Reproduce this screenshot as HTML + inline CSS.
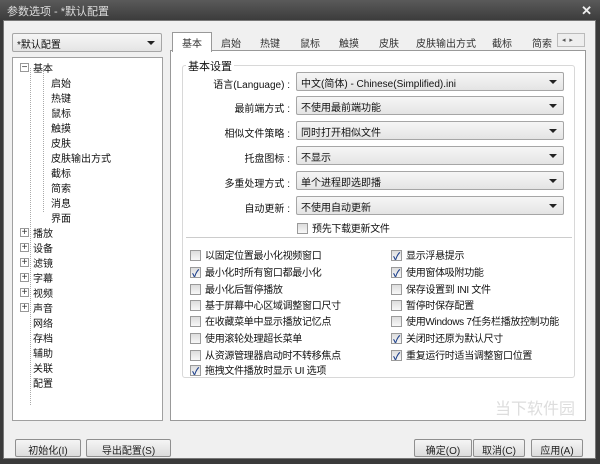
<!DOCTYPE html>
<html><head><meta charset="utf-8"><style>
*{margin:0;padding:0;box-sizing:border-box}
body{width:600px;height:464px;background:#3a3a3a;font-family:"Liberation Sans","Noto Sans CJK SC",sans-serif;font-size:10.5px;color:#111;position:relative;overflow:hidden}
.a{position:absolute}
.title{left:0;top:0;width:600px;height:20px;background:linear-gradient(#5a5a5a,#3c3c3c);color:#ddd;font-size:11px;padding:3px 0 0 7px}
.client{left:3px;top:20px;width:593px;height:439px;background:#f0f0f0;border:1px solid #777}
.box{background:#fff;border:1px solid #a0a0a0}
.dd{background:linear-gradient(#f6f6f6,#e4e4e4);border:1px solid #a6a6a6;border-radius:2px;height:19px;padding:2px 0 0 4px;white-space:nowrap;font-size:10px}
.dd:after{content:"";position:absolute;right:6px;top:7px;border:4px solid transparent;border-top:4px solid #222;border-bottom:0}
.lbl{text-align:right;width:110px;font-size:10px}
.cb{width:11px;height:11px;border:1px solid #9a9a9a;background:linear-gradient(#ddd,#f8f8f8);display:inline-block;vertical-align:-2px;margin-right:4px;position:relative}
.cb.k:after{content:"✓";position:absolute;left:1px;top:-3px;font-size:10px;color:#1d3f8a;font-weight:bold}
.row{white-space:nowrap;font-size:10px;letter-spacing:-0.3px}
.tree div{position:absolute;white-space:nowrap;font-size:10px}
.pm{width:9px;height:9px;border:1px solid #999;background:#fff;font-size:9px;line-height:7px;text-align:center;color:#333}
.tab{top:35px;height:17px;white-space:nowrap;color:#333;font-size:10px}
.btn{height:18px;border:1px solid #8f8f8f;border-radius:2px;background:linear-gradient(#f5f5f5,#dcdcdc);text-align:center;padding-top:2px;color:#222;font-size:10px}
</style></head><body>
<div class="a title">参数选项 - *默认配置</div>
<div class="a" style="right:8px;top:3px;color:#eee;font-size:13px;font-weight:bold">✕</div>
<div class="a client"></div>
<div class="a dd" style="left:12px;top:33px;width:150px;">*默认配置</div>
<div class="a box tree" style="left:12px;top:57px;width:151px;height:364px">
<div style="left:17px;top:10px;width:1px;height:337px;border-left:1px dotted #aaa"></div>
<div class="pm" style="left:7px;top:5px">−</div><div style="left:20px;top:2px">基本</div>
<div style="left:30px;top:9px;width:1px;height:145px;border-left:1px dotted #aaa"></div>
<div style="left:38px;top:17px">启始</div><div style="left:38px;top:32px">热键</div><div style="left:38px;top:47px">鼠标</div><div style="left:38px;top:62px">触摸</div><div style="left:38px;top:77px">皮肤</div><div style="left:38px;top:92px">皮肤输出方式</div><div style="left:38px;top:107px">截标</div><div style="left:38px;top:122px">简索</div><div style="left:38px;top:137px">消息</div><div style="left:38px;top:152px">界面</div>
<div class="pm" style="left:7px;top:170px">+</div><div style="left:20px;top:167px">播放</div>
<div class="pm" style="left:7px;top:185px">+</div><div style="left:20px;top:182px">设备</div>
<div class="pm" style="left:7px;top:200px">+</div><div style="left:20px;top:197px">滤镜</div>
<div class="pm" style="left:7px;top:215px">+</div><div style="left:20px;top:212px">字幕</div>
<div class="pm" style="left:7px;top:230px">+</div><div style="left:20px;top:227px">视频</div>
<div class="pm" style="left:7px;top:245px">+</div><div style="left:20px;top:242px">声音</div>
<div style="left:20px;top:257px">网络</div><div style="left:20px;top:272px">存档</div><div style="left:20px;top:287px">辅助</div><div style="left:20px;top:302px">关联</div><div style="left:20px;top:317px">配置</div>
</div>
<div class="a box" style="left:170px;top:50px;width:416px;height:371px;border-color:#999"></div>
<div class="a" style="left:172px;top:32px;width:40px;height:20px;background:#fff;border:1px solid #999;border-bottom:none"></div>
<div class="a tab" style="left:182px">基本</div><div class="a tab" style="left:221px">启始</div><div class="a tab" style="left:260px">热键</div><div class="a tab" style="left:300px">鼠标</div><div class="a tab" style="left:339px">触摸</div><div class="a tab" style="left:379px">皮肤</div><div class="a tab" style="left:416px">皮肤输出方式</div><div class="a tab" style="left:492px">截标</div><div class="a tab" style="left:532px">简索</div>
<div class="a" style="left:557px;top:33px;width:28px;height:14px;background:#eee;border:1px solid #bbb;font-size:7px;color:#555;padding:2px 0 0 4px">◂ &nbsp;▸</div>
<div class="a" style="left:182px;top:65px;width:393px;height:313px;border:1px solid #d8d8d8;border-radius:3px"></div>
<div class="a" style="left:186px;top:58px;background:#fff;padding:0 2px;font-size:11px">基本设置</div>
<div class="a lbl" style="left:180px;top:76px">语言(Language) :</div><div class="a dd" style="left:296px;top:72px;width:268px">中文(简体) - Chinese(Simplified).ini</div>
<div class="a lbl" style="left:180px;top:100px">最前端方式 :</div><div class="a dd" style="left:296px;top:96px;width:268px">不使用最前端功能</div>
<div class="a lbl" style="left:180px;top:125px">相似文件策略 :</div><div class="a dd" style="left:296px;top:121px;width:268px">同时打开相似文件</div>
<div class="a lbl" style="left:180px;top:150px">托盘图标 :</div><div class="a dd" style="left:296px;top:146px;width:268px">不显示</div>
<div class="a lbl" style="left:180px;top:175px">多重处理方式 :</div><div class="a dd" style="left:296px;top:171px;width:268px">单个进程即选即播</div>
<div class="a lbl" style="left:180px;top:200px">自动更新 :</div><div class="a dd" style="left:296px;top:196px;width:268px">不使用自动更新</div>
<div class="a row" style="left:297px;top:220px"><span class="cb"></span>预先下载更新文件</div>
<div class="a" style="left:186px;top:237px;width:386px;border-top:1px solid #ccc"></div>
<div class="a row" style="left:190px;top:247px"><span class="cb"></span>以固定位置最小化视频窗口</div>
<div class="a row" style="left:190px;top:264px"><span class="cb k"></span>最小化时所有窗口都最小化</div>
<div class="a row" style="left:190px;top:281px"><span class="cb"></span>最小化后暂停播放</div>
<div class="a row" style="left:190px;top:297px"><span class="cb"></span>基于屏幕中心区域调整窗口尺寸</div>
<div class="a row" style="left:190px;top:313px"><span class="cb"></span>在收藏菜单中显示播放记忆点</div>
<div class="a row" style="left:190px;top:330px"><span class="cb"></span>使用滚轮处理超长菜单</div>
<div class="a row" style="left:190px;top:347px"><span class="cb"></span>从资源管理器启动时不转移焦点</div>
<div class="a row" style="left:190px;top:362px"><span class="cb k"></span>拖拽文件播放时显示 UI 选项</div>
<div class="a row" style="left:391px;top:247px"><span class="cb k"></span>显示浮悬提示</div>
<div class="a row" style="left:391px;top:264px"><span class="cb k"></span>使用窗体吸附功能</div>
<div class="a row" style="left:391px;top:281px"><span class="cb"></span>保存设置到 INI 文件</div>
<div class="a row" style="left:391px;top:297px"><span class="cb"></span>暂停时保存配置</div>
<div class="a row" style="left:391px;top:313px"><span class="cb"></span>使用Windows 7任务栏播放控制功能</div>
<div class="a row" style="left:391px;top:330px"><span class="cb k"></span>关闭时还原为默认尺寸</div>
<div class="a row" style="left:391px;top:347px"><span class="cb k"></span>重复运行时适当调整窗口位置</div>
<div class="a" style="left:495px;top:395px;color:#ddd;font-size:16px">当下软件园</div>
<div class="a btn" style="left:15px;top:439px;width:66px">初始化(I)</div>
<div class="a btn" style="left:86px;top:439px;width:85px">导出配置(S)</div>
<div class="a btn" style="left:414px;top:439px;width:58px">确定(O)</div>
<div class="a btn" style="left:473px;top:439px;width:52px">取消(C)</div>
<div class="a btn" style="left:531px;top:439px;width:52px">应用(A)</div>
</body></html>
